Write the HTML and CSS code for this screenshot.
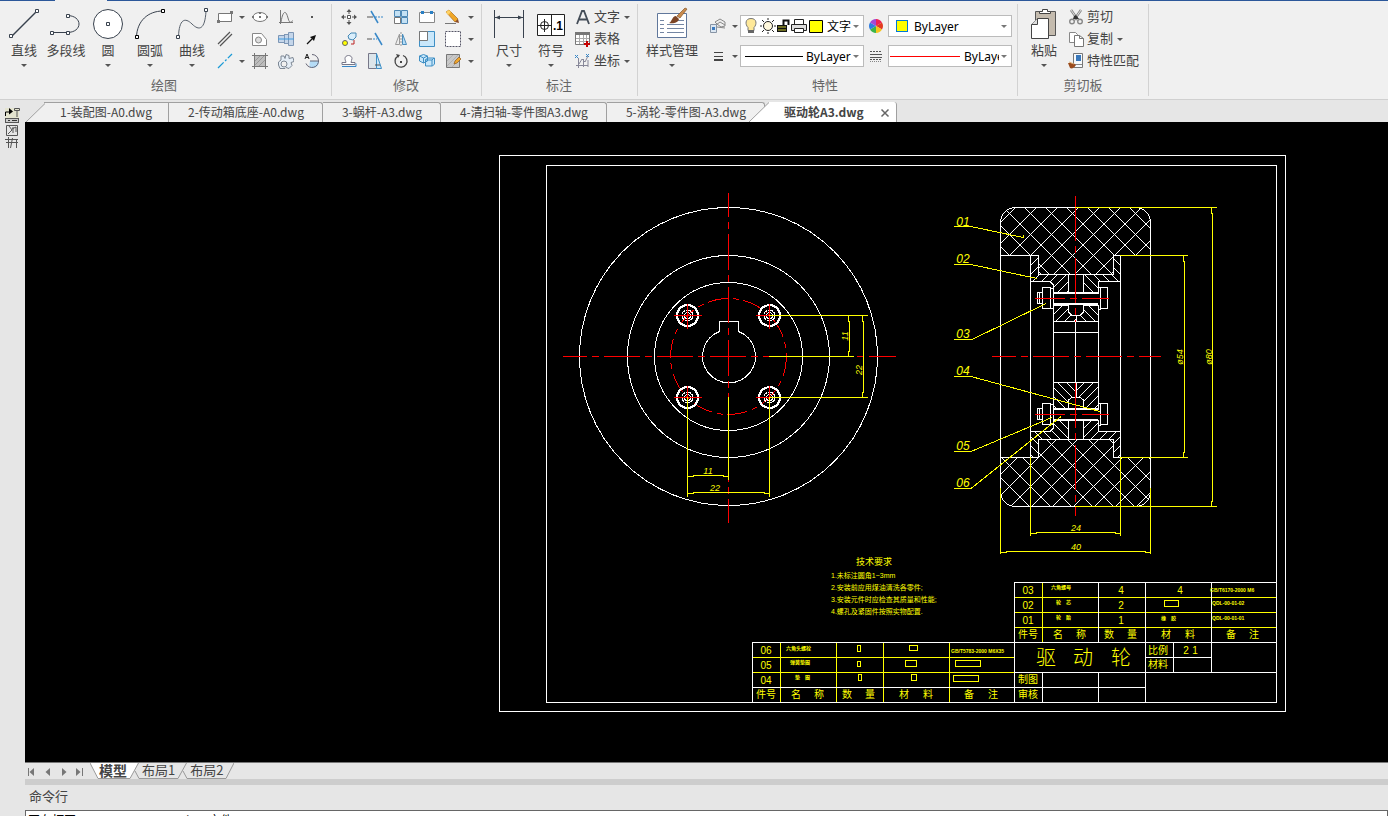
FILE: index.html
```html
<!doctype html>
<html lang="zh-CN">
<head>
	<title>驱动轮A3.dwg</title>
	<meta charset="utf-8">
	<link rel="stylesheet" href="styles.css">
</head>
<body>

	<!-- 功能区 -->
	<header class="ribbon">

		<!-- 绘图 -->
		<section class="group group-draw">
			<div class="tools">
				<button class="big"><svg width="36" height="36"><path d="M6 30L30 6" stroke="#39424e" stroke-width="1.5"/><g class="node"><path d="M3.500 28.500h3v3h-3zM29.500 3.500h3v3h-3z"/></g></svg><span>直线</span><i class="caret"></i></button>
				<button class="big"><svg width="36" height="36"><path d="M4 26.500H19C35 26.500 35 9.500 19 9.500" fill="none" stroke="#39424e"/><g class="node"><path d="M2.500 25.500h3v3h-3zM18.500 25.500h3v3h-3zM18.500 8.500h3v3h-3z"/></g></svg><span>多段线</span></button>
				<button class="big"><svg width="36" height="36"><circle cx="18" cy="18" r="14.500" fill="#fff" stroke="#39424e"/><path class="node" d="M16.500 16.500h3v3h-3z"/></svg><span>圆</span><i class="caret"></i></button>
				<button class="big"><svg width="36" height="36"><path d="M4.500 31C5 15 16 5 31 5" fill="none" stroke="#39424e"/><g class="node dark"><path d="M3.500 29.500h3v3h-3zM29.500 3.500h3v3h-3z"/></g></svg><span>圆弧</span><i class="caret"></i></button>
				<button class="big"><svg width="36" height="36"><path d="M4.500 31C5 13 11 11 18 18S31 24 32 5" fill="none" stroke="#58616c"/><g class="node"><path d="M2.500 29.500h3v3h-3zM30.500 2.500h3v3h-3z"/></g></svg><span>曲线</span><i class="caret"></i></button>
				<div class="grid grid-draw">
					<button aria-label="矩形"><svg width="16" height="16"><path d="M1.500 4.500h13v8h-13z" fill="#fff" stroke="#777"/><path d="M0 11h3v3H0zM13 2h3v3h-3z" fill="#777"/></svg></button>
					<i class="caret"></i>
					<button aria-label="椭圆"><svg width="16" height="16"><ellipse cx="8" cy="8" rx="7" ry="4.500" fill="#fff" stroke="#777"/><path d="M0 7h2v2H0zM7 7h2v2H7zM14 7h2v2h-2zM7 3h2v2H7z" fill="#777"/></svg></button>
					<button aria-label="函数曲线"><svg width="16" height="16"><path d="M2.500 1v14M1 13.500h14M3 13C5 1 8 1 10 9S14 11 15 12" fill="none" stroke="#777"/></svg></button>
					<button aria-label="点"><svg width="16" height="16"><path d="M7 7h2v2H7z" fill="#555"/></svg></button>

					<button aria-label="平行线"><svg width="16" height="16"><path d="M1 13L13 1M3 15L15 3" stroke="#555" stroke-width="1.200"/></svg></button>
					<i></i>
					<button aria-label="轮廓"><svg width="16" height="16"><path d="M.5 14.500v-12h9l5 6v6z" fill="#fff" stroke="#888"/><circle cx="6.500" cy="9" r="3" fill="#ddd" stroke="#888"/></svg></button>
					<button aria-label="轴"><svg width="16" height="16"><path d="M.5 4.500h6v-1h4v-2h5v13h-5v-2h-4v-1h-6z" fill="#c5d6ea" stroke="#7d96b5"/><path d="M6.500 3v10M10.500 2v12" stroke="#7d96b5"/><path d="M0 8h16" stroke="#3f9be0"/></svg></button>
					<button aria-label="箭头"><svg width="16" height="16"><path d="M3 13L8 8" stroke="#111" stroke-width="1.200"/><path d="M12 4L10 10 6 6z" fill="#111"/></svg></button>

					<button aria-label="中心线"><svg width="16" height="16"><path d="M1 15L15 1" stroke="#1a9ad6" stroke-width="1.300" stroke-dasharray="8 2 2 2"/></svg></button>
					<i class="caret"></i>
					<button aria-label="剖面线"><svg width="16" height="16"><path d="M2.500 2.500h11v11h-11z" fill="#bdbdbd"/><path d="M3 8l5-5M3 12l9-9M7 13l6-6" stroke="#999"/><path d="M2.500 0v16M13.500 0v16M0 2.500h16M0 13.500h16" stroke="#777"/></svg></button>
					<button aria-label="齿轮"><svg width="16" height="16"><path d="M7 5.500l1-4 3 1v3l4-1 1 4-3 1 1 3-3 3-3-1-1 1H2L.5 12V9L3 7V3h3z" fill="#e4edf6" stroke="#7d8794"/><circle cx="6" cy="11" r="3" fill="#f0f0f0" stroke="#7d8794"/></svg></button>
					<button aria-label="局部放大"><svg width="16" height="16"><path d="M6 8h9c0 4-2 7-6 7s-4-3-3-7z" fill="#b5dcf7"/><path d="M8 1.500a6.500 6.500 0 1 1-6 9M6 8h9" fill="none" stroke="#667"/><path d="M1 6l2-5 2 5M2 4.500h3" stroke="#222" fill="none"/></svg></button>
				</div>
			</div>
			<h2>绘图</h2>
		</section>

		<!-- 修改 -->
		<section class="group group-edit">
			<div class="tools">
				<div class="grid grid-edit">
					<button aria-label="移动"><svg width="16" height="16"><path d="M6.500 6.500h3v3h-3z" fill="#fff" stroke="#555"/><path d="M8 1v4M8 11v4M1 8h4M11 8h4" stroke="#555"/><path d="M8 0l2.500 3h-5zM8 16l2.500-3h-5zM0 8l3-2.500v5zM16 8l-3-2.500v5z" fill="#555"/></svg></button>
					<button aria-label="裁剪"><svg width="16" height="16"><path d="M0 8h6" stroke="#555"/><path d="M8 8h8" stroke="#3787c8" stroke-dasharray="2 1"/><path d="M4 2l7 12" stroke="#3787c8" stroke-width="1.500"/></svg></button>
					<button aria-label="阵列"><svg width="16" height="16"><path d="M1.500 1.500h6v6h-6zM8.500 1.500h6v6h-6zM8.500 8.500h6v6h-6z" fill="#c4e1f4" stroke="#4e88b5"/><path d="M1.500 8.500h6v6h-6z" fill="#fff" stroke="#777"/></svg></button>
					<button aria-label="打断"><svg width="16" height="16"><path d="M2 3.500H.5v10h15v-10H14M5 3.500h6" fill="#fff" stroke="#888"/><path d="M2 2h3v3H2zM11 2h3v3h-3z" fill="#297fc4"/></svg></button>
					<button aria-label="删除"><svg width="16" height="16"><path d="M1 3l3-2 9 9-3 3z" fill="#f0a727" stroke="#a66b1d" stroke-width=".7"/><path d="M1 3l3-2 2 2-3 3z" fill="#ffd263"/><path d="M10 13l3-3 1 4z" fill="#8a4c2a"/><path d="M0 14.500h11" stroke="#777"/></svg></button>
					<i class="caret"></i>

					<button aria-label="复制"><svg width="16" height="16"><circle cx="4" cy="12" r="2.500" fill="#ff0" stroke="#666"/><path d="M7 5l3-3 5 0v4l-3 3-4-1z" fill="#d9eefb" stroke="#4588b5"/><path d="M10 13h3V9" stroke="#b22" fill="none"/></svg></button>
					<button aria-label="延伸"><svg width="16" height="16"><path d="M0 8h5" stroke="#555"/><path d="M6 8h4" stroke="#3787c8" stroke-dasharray="2 1"/><path d="M8 2l7 12" stroke="#3787c8" stroke-width="1.500"/></svg></button>
					<button aria-label="镜像"><svg width="16" height="16"><path d="M6.500 3v10.500h-4z" fill="#eee" stroke="#999"/><path d="M9.500 3v10.500h4z" fill="#b5dcf7" stroke="#4b8dbb"/><path d="M8 1v14" stroke="#999" stroke-dasharray="2 1"/></svg></button>
					<button aria-label="缩放"><svg width="16" height="16"><path d="M.5 .5h15v15H.5z" fill="#c9e7fa" stroke="#3f8fc4"/><path d="M.5 .5h8v9h-8z" fill="#fff" stroke="#777"/></svg></button>
					<button aria-label="选择区域"><svg width="16" height="16"><path d="M.5 .5h15v15H.5z" fill="#fff" stroke="#556" stroke-dasharray="2 1"/></svg></button>
					<i class="caret"></i>

					<button aria-label="偏移"><svg width="16" height="16"><path d="M1 9.500h4c0-1-1-2-1-4 0-4 7-4 7 0 0 1-1 3-1 4h4v2H1z" fill="#fff" stroke="#778"/><path d="M1 13.500h14v-3" fill="none" stroke="#3787c8"/></svg></button>
					<button aria-label="拉伸"><svg width="16" height="16"><path d="M1.500 .5h8v15h-8z" fill="#dce5ea" stroke="#778"/><path d="M9.500 .5l5 15h-5z" fill="#c9e7fa" stroke="#3f8fc4"/><path d="M8 12h5" stroke="#555"/></svg></button>
					<button aria-label="旋转"><svg width="16" height="16"><path d="M10 2.500a6 6 0 1 1-5 .5" fill="none" stroke="#444" stroke-width="1.300"/><path d="M3 1l4 1-2 3zM7 8h2v2H7z" fill="#444"/></svg></button>
					<button aria-label="分解"><svg width="16" height="16"><path d="M.5 3l4-1.500 4 1.500v5l-4 2-4-2zM8.500 5h7v6l-2 2h-7V7z" fill="#c9e7fa" stroke="#3f8fc4"/><path d="M.5 3l4 2 4-2M4.500 5v5M6 7h7l2-2M13 7v6" fill="none" stroke="#3f8fc4"/></svg></button>
					<button aria-label="编辑填充"><svg width="16" height="16"><path d="M1.500 1.500h13v13h-13z" fill="#c8c8c8" stroke="#777"/><path d="M2 8l6-6M2 13L13 2M7 14l7-7" stroke="#b0b0b0"/><path d="M9 11l1-3 4-4 2 2-4 4z" fill="#efa62b" stroke="#8d5a20" stroke-width=".7"/></svg></button>
					<i class="caret"></i>
				</div>
			</div>
			<h2>修改</h2>
		</section>

		<!-- 标注 -->
		<section class="group group-note">
			<div class="tools">
				<button class="big"><svg width="36" height="36"><path d="M3.500 4v28M32.500 4v28M4 11.500h28" stroke="#39424e"/><path d="M4 11.500l5-2v4zM32 11.500l-5-2v4z" fill="#39424e"/></svg><span>尺寸</span><i class="caret"></i></button>
				<button class="big"><svg width="36" height="36"><path d="M4.500 8.500h27v21h-27zM18.500 8v22" fill="#fff" stroke="#222"/><circle cx="11.500" cy="19.500" r="4" fill="none" stroke="#222"/><path d="M5 19.500h13M11.500 13v13" stroke="#222"/><text x="20" y="24" font-size="12" font-weight="bold" font-family="Liberation Sans">.1</text></svg><span>符号</span><i class="caret"></i></button>
				<div class="list">
					<button><svg width="16" height="16"><path d="M2 15L7 2h2l5 13M4 10.500h8" fill="none" stroke="#444d58" stroke-width="1.800"/></svg><span>文字</span><i class="caret"></i></button>
					<button><svg width="16" height="16"><path d="M.5 1.500h14v12H.5z" fill="#fff" stroke="#777"/><path d="M0 1h15v3H0z" fill="#777"/><path d="M4.500 4v9M8.500 4v9M11.500 4v9M1 7.500h13M1 10.500h13" stroke="#aaa"/><path d="M12 10v6M9 13h6" stroke="#c40000" stroke-width="2"/></svg><span>表格</span></button>
					<button><svg width="16" height="16"><path d="M3.500 5v10M1 12.500h12M4 11l3-5 3 3 3-6M8.500 6v8M13 7v7" fill="none" stroke="#889"/><path d="M0 2l3 3M3 2L0 5M11 1l3 3M14 1l-3 3" stroke="#3787c8"/></svg><span>坐标</span><i class="caret"></i></button>
				</div>
			</div>
			<h2>标注</h2>
		</section>

		<!-- 特性 -->
		<section class="group group-prop">
			<div class="tools">
				<button class="big wide"><svg width="36" height="36"><path d="M3.500 7.500h29v24h-29z" fill="#fff" stroke="#60779b"/><path d="M6 14.500h4M6 18.500h4M6 22.500h4M6 26.500h4M13 18.500h17M13 22.500h17M13 26.500h17M23 14.500h7" stroke="#7486a3"/><path d="M31 2l2 1-7 9-3-2z" fill="#c98b4e" stroke="#875626" stroke-width=".7"/><path d="M15 17c3-1 3-7 7-7l3 3c-1 4-6 5-10 4z" fill="#7c4424"/></svg><span>样式管理</span><i class="caret"></i></button>
				<div class="props">
					<button aria-label="图层"><svg width="16" height="16"><path d="M5 4l5-3 5 3v4l-4 1-4-3zM6 7l4-3 5 3M7 9l8 1" fill="#eee" stroke="#888"/><path d="M.5 6.500h6v8h-6z" fill="#dce7f2" stroke="#8794a5"/><path d="M2 9h3v3H2z" fill="#3b7bc0"/></svg></button>
					<i class="caret"></i>
					<div class="combo combo-layer">
						<svg width="84" height="18"><path d="M6 1.500c-6 0-6 6-3 9v3h6v-3c3-3 3-9-3-9z" fill="#ffe99a" stroke="#777"/><path d="M3 13h6v3H3z" fill="#666"/><circle cx="23" cy="9" r="4.500" fill="#fff8dc" stroke="#222"/><path d="M23 1v2M23 15v2M15 9h2M29 9h2M17 3l2 2M27 13l2 2M29 3l-2 2M17 15l2-2" stroke="#222"/><path d="M32 8h10v7H32z" fill="#111"/><path d="M33 10h8M33 13h8" stroke="#cc3"/><path d="M38.500 8V3.500h5V8" stroke="#111" stroke-width="2" fill="none"/><path d="M49.500 7V2.500h9V7" fill="#fff" stroke="#222"/><path d="M46.500 7.500h15v6h-15z" fill="#ddd" stroke="#222"/><path d="M49.500 11.500h9v4h-9z" fill="#fff" stroke="#222"/><path d="M64.500 3.500h13v12h-13z" fill="#ff0" stroke="#000"/></svg>
						<select aria-label="图层"><option>文字</option></select>
						<i class="caret"></i>
					</div>
					<button aria-label="颜色"><svg width="16" height="16" viewBox="-8 -8 16 16"><path d="M0 0V-7A7 7 0 0 1 6 -3.500z" fill="#e25"/><path d="M0 0L6 -3.500A7 7 0 0 1 6 3.500z" fill="#e33a20"/><path d="M0 0L6 3.500A7 7 0 0 1 0 7z" fill="#f6c51d"/><path d="M0 0V7A7 7 0 0 1 -6 3.500z" fill="#3cb54a"/><path d="M0 0L-6 3.500A7 7 0 0 1 -6 -3.500z" fill="#2e7de0"/><path d="M0 0L-6 -3.500A7 7 0 0 1 0 -7z" fill="#a348d6"/></svg></button>
					<div class="combo">
						<i class="swatch"></i>
						<select aria-label="颜色"><option>ByLayer</option></select>
						<i class="caret"></i>
					</div>

					<button aria-label="线宽"><svg width="16" height="16"><path d="M4 4.500h9M4 8.500h9" stroke="#444"/><path d="M4 12h9" stroke="#444" stroke-width="2"/></svg></button>
					<i class="caret"></i>
					<div class="combo">
						<i class="line"></i>
						<select aria-label="线宽"><option>ByLayer</option></select>
						<i class="caret"></i>
					</div>
					<button aria-label="线型"><svg width="16" height="16"><path d="M2 3.500h12M2 11.500h12" stroke="#555" stroke-dasharray="2 1"/><path d="M2 6.500h12M2 9.500h12" stroke="#555"/><path d="M2 13.500h12" stroke="#888" stroke-dasharray="1 1"/></svg></button>
					<div class="combo">
						<i class="line line-red"></i>
						<select aria-label="线型"><option>ByLayer</option></select>
						<i class="caret"></i>
					</div>
				</div>
			</div>
			<h2>特性</h2>
		</section>

		<!-- 剪切板 -->
		<section class="group group-clip">
			<div class="tools">
				<button class="big"><svg width="36" height="36"><path d="M9.500 5.500h20v24h-20z" fill="#c4bbae" stroke="#555"/><path d="M13.500 7.500v-2h3v-2h5v2h3v2z" fill="#fff" stroke="#444"/><path d="M5.500 18.500l6-6h11v20h-17z" fill="#fff" stroke="#444"/><path d="M5.500 18.500h6v-6" fill="#ddd" stroke="#444"/></svg><span>粘贴</span><i class="caret"></i></button>
				<div class="list">
					<button><svg width="16" height="16"><path d="M3 1l7 10M13 1L6 11" stroke="#888" stroke-width="2.500"/><path d="M3 1l7 10M13 1L6 11" stroke="#ddd"/><path d="M6 7l2-1 3 4H5z" fill="#333"/><circle cx="4" cy="12.500" r="2.300" fill="none" stroke="#888" stroke-width="1.400"/><circle cx="12" cy="12.500" r="2.300" fill="none" stroke="#888" stroke-width="1.400"/></svg><span>剪切</span></button>
					<button><svg width="16" height="16"><path d="M1.500 1.500h6l2 2v8h-8z" fill="#fff" stroke="#888"/><path d="M6.500 4.500h5l4 3v8h-9z" fill="#fff" stroke="#777"/><path d="M11.500 4.500v3h4" fill="none" stroke="#777"/></svg><span>复制</span><i class="caret"></i></button>
					<button><svg width="16" height="16"><path d="M5.500 .5h9v14h-9z" fill="#f6f9fc" stroke="#777"/><path d="M8 2h5v6H8z" fill="#3978bb"/><path d="M7 11.500h7" stroke="#888"/><path d="M0 10c3 0 6 0 8 2-2 3-4 4-6 3z" fill="#9a4b1d"/><path d="M1 9l5 2" stroke="#e0ae72"/></svg><span>特性匹配</span></button>
				</div>
			</div>
			<h2>剪切板</h2>
		</section>
	</header>

	<div class="work">
		<!-- 左侧停靠栏 -->
		<aside class="dock">
			<svg width="18" height="44" viewBox="3 106 18 44"><path d="M5 108h14v13H5z" fill="#e4e4cf"/><path d="M5.500 116v-4h4" fill="none" stroke="#000"/><path d="M9 108l4 3.500-4 3z" fill="#000"/><path d="M14.500 108.500v2h5v-2zM17 111v6" stroke="#555" fill="none"/><rect x="5.500" y="118.500" width="13" height="4" fill="#ccc" stroke="#555"/><path d="M8 120.500h2M12 120.500h5" stroke="#333"/><path d="M6.500 125.500h11v10h-11zM9 126l3 4-4 4M13 127v6M12 129l4-2v5" fill="none" stroke="#555"/><path d="M5 139.500h13M6 142.500h12M8.500 137v11M12.500 138l-2 10M16.500 139v9" fill="none" stroke="#555"/></svg>
		</aside>

		<main class="main">
			<!-- 文件标签 -->
			<nav class="tabs">
				<a class="tab first" href="#"><svg width="20" height="20"><path d="M0 20L20 .5V20z" fill="#f0f0f0"/><path d="M0 20L20 .5" stroke="#a0a0a0"/></svg><span>1-装配图-A0.dwg</span></a>
				<a class="tab" href="#"><span>2-传动箱底座-A0.dwg</span></a>
				<a class="tab" href="#"><span>3-蜗杆-A3.dwg</span></a>
				<a class="tab" href="#"><span>4-清扫轴-零件图A3.dwg</span></a>
				<a class="tab" href="#"><span>5-涡轮-零件图-A3.dwg</span></a>
				<a class="tab active" href="#"><svg width="20" height="20"><path d="M0 20L20 .5V20z" fill="#fff"/><path d="M0 20L20 .5" stroke="#a0a0a0"/></svg><span>驱动轮A3.dwg</span><svg class="close" width="10" height="10"><path d="M1.500 1.500l7 7M8.500 1.500l-7 7" stroke="#666" stroke-width="1.500"/></svg></a>
			</nav>

			<!-- 绘图区 -->
			<div class="canvas">
				<svg viewBox="25 122 1363 640" preserveAspectRatio="xMinYMin meet">
					<defs>
						<!-- 橡胶网格剖面线 -->
						<pattern id="rubber" patternUnits="userSpaceOnUse" x="1020" y="224" width="21" height="21"><path d="M0 0L21 21M21 0L0 21" stroke="#fff"/></pattern>
						<pattern id="steelA" patternUnits="userSpaceOnUse" width="9" height="9"><path d="M0 9L9 0" stroke="#fff"/></pattern>
						<pattern id="steelB" patternUnits="userSpaceOnUse" width="9" height="9"><path d="M0 0L9 9" stroke="#fff"/></pattern>
						<g id="screw">
							<circle r="10.500" stroke-width="2"/>
							<circle r="5.500" stroke-dasharray="5 1"/><circle r="3"/>
							<path class="r" d="M-14 0H14M0 -12V13"/>
						</g>
						<g id="bolt">
							<path d="M1053 -5.500H1098M1053 5.500H1098" stroke-width="2"/>
							<path d="M1042.500 -10.500H1050.500V10.500H1042.500zM1042 -5.500H1037.500V5.500H1042M1039.500 -5V5M1050.500 -9.500H1053V10H1050.500M1100.500 -10.500H1107.500V10.500H1100.500zM1098.500 -11H1100.500V11H1098.500"/>
							<path class="r" d="M1035 0.500H1109" stroke-dasharray="30 5 7 5"/>
						</g>
					</defs>

					<!-- 图框 -->
					<g class="w">
						<path d="M499.500 155.500H1285.500V711.500H499.500zM546.500 165.500H1276.500V702.500H546.500z"/>
					</g>

					<!-- 主视图 -->
					<g class="w">
						<circle cx="728.500" cy="356.500" r="149"/>
						<circle cx="728.500" cy="356.500" r="101"/>
						<circle cx="728.500" cy="356.500" r="74"/>
						<path d="M719.500 331.500V321.500H738.500V331.500A26.500 26.500 0 1 1 719.500 331.500"/>
						<circle class="r" cx="728.500" cy="356.500" r="58" stroke-dasharray="20 5 6 5"/>
						<use href="#screw" x="687.500" y="315.500"/>
						<use href="#screw" x="769.500" y="315.500"/>
						<use href="#screw" x="687.500" y="397.500"/>
						<use href="#screw" x="769.500" y="397.500"/>
					</g>
					<path class="r" d="M563 356.500H896M728.500 193V523" stroke-dasharray="36 5 7 5" stroke-dashoffset="12"/>
					<g class="y">
						<path d="M769 315.500H868M769 397.500H868M769 356.500H854M687.500 397V497M728.500 397V480M769.500 397V497"/>
						<path d="M848.500 315V321H849.500V351H848.500V357M862.500 315V321H863.500V392H862.500V398"/>
						<path d="M687 476.500H693V475.500H723V476.500H729M687 493.500H693V492.500H764V493.500H770"/>
					</g>
					<g class="dim">
						<text x="708" y="474">11</text>
						<text x="715" y="491">22</text>
						<text transform="translate(848 336) rotate(-90)">11</text>
						<text transform="translate(862 370) rotate(-90)">22</text>
					</g>

					<!-- 剖视图 -->
					<g class="w">
						<path fill="url(#rubber)" d="M1000.500 255.500V222.500A15 15 0 0 1 1015.500 207.500H1135.500A15 15 0 0 1 1150.500 222.500V255.500H1113.500V274.500H1038.500V255.500z"/>
						<path fill="url(#rubber)" d="M1000.500 457.500V491.500A15 15 0 0 0 1015.500 506.500H1135.500A15 15 0 0 0 1150.500 491.500V457.500H1113.500V439.500H1038.500V457.500z"/>
						<path fill="url(#steelA)" d="M1030.500 255.500H1038.500V271L1041 274.500H1068.500V293.500H1053.500V285L1050 281.500H1030.500z"/>
						<path fill="url(#steelB)" d="M1120.500 255.500H1113.500V271L1111 274.500H1083.500V293.500H1098.500V281.500H1120.500z"/>
						<path fill="url(#steelA)" d="M1053.500 305.500H1068.500V312L1072 315.500H1076V321.500H1053.500z"/>
						<path fill="url(#steelB)" d="M1098.500 305.500H1083.500V312L1080 315.500H1076V321.500H1098.500z"/>
						<path fill="url(#steelB)" d="M1053.500 409.500H1068.500V400L1072 397.500H1076V382.500H1053.500z"/>
						<path fill="url(#steelA)" d="M1098.500 409.500H1083.500V400L1080 397.500H1076V382.500H1098.500z"/>
						<path fill="url(#steelB)" d="M1030.500 457.500H1038.500V439.500H1068.500V420.500H1053.500V428L1050 431.500H1030.500z"/>
						<path fill="url(#steelA)" d="M1120.500 457.500H1113.500V439.500H1083.500V420.500H1098.500V431.500H1120.500z"/>
						<path d="M1000.500 255V458M1150.500 255V458M1030.500 281V432M1120.500 281V432M1053.500 321V383M1098.500 321V383M1075.500 321V383M1053 332.500H1098"/>
						<use href="#bolt" y="298"/>
						<use href="#bolt" y="414"/>
					</g>
					<path class="r" d="M992 356.500H1161" stroke-dasharray="36 5 7 5" stroke-dashoffset="12"/>
					<path class="r" d="M1075.500 196V322M1075.500 383V516" stroke-dasharray="45 5 7 5"/>
					<g class="y">
						<path d="M1075 207.500H1217M1120 255.500H1188M1120 457.500H1188M1075 506.500H1217"/>
						<path d="M1183.500 255V261H1184.500V452H1183.500V458M1211.500 207V213H1212.500V501H1211.500V507"/>
						<path d="M1030.500 457V536M1120.500 457V536M1000.500 488V554M1150.500 488V554"/>
						<path d="M1030 533.500H1036V532.500H1115V533.500H1121M1000 552.500H1006V551.500H1145V552.500H1151"/>
						<!-- 序号引线 -->
						<path d="M954 226.500H971L1023 237.500V235M954 264.500H971L1037 278.500M954 339.500H972L1046 303.500M954 376.500H971L1100 411.500M954 451.500H971L1052 417.500M954 488.500H971L1061 416.500"/>
					</g>
					<g class="dim">
						<text x="1076" y="531">24</text>
						<text x="1076" y="550">40</text>
						<text transform="translate(1183 357) rotate(-90)">ø54</text>
						<text transform="translate(1212 357) rotate(-90)">ø80</text>
					</g>
					<g class="no">
						<text x="963" y="226">01</text>
						<text x="963" y="263">02</text>
						<text x="963" y="338">03</text>
						<text x="963" y="375">04</text>
						<text x="963" y="450">05</text>
						<text x="963" y="487">06</text>
					</g>

					<!-- 技术要求 -->
					<g class="note">
						<text class="note-title" x="856" y="565">技术要求</text>
						<text x="831" y="578">1.未标注圆角1~3mm</text>
						<text x="831" y="590">2.安装前应用煤油清洗各零件;</text>
						<text x="831" y="602">3.安装元件时应检查其质量和性能;</text>
						<text x="831" y="614">4.螺孔及紧固件按照实物配置.</text>
					</g>

					<!-- 标题栏 -->
					<g class="y">
						<path d="M752 657.500H1014M752 672.500H1014M780.500 643V702M836.500 643V702M883.500 643V702M949.500 643V702"/>
						<path d="M1014 597.500H1276M1014 612.500H1276M1014 627.500H1276M1042.500 583V642"/>
						<path d="M857.500 645.500h3v6h-3zM909.500 645.500h8v5h-8zM857.500 661.500h3v5h-3zM905.500 660.500h11v6h-11zM955.500 660.500h25v6h-25zM858.500 674.500h3v6h-3zM911.500 674.500h5v6h-5zM953.500 675.500h25v6h-25zM1164.500 600.500h14v6h-14z"/>
					</g>
					<g class="w">
						<path d="M752.500 702V642.500H1014M752 687.500H1014M1014.500 702V582.500H1276M1014 642.500H1276M1014 672.500H1276M1098.500 583V642M1145.500 583V702M1211.500 583V672M1145 657.500H1211M1173.500 642V672M1014 687.500H1145M1042.500 672V702M1098.500 672V702"/>
					</g>
					<g class="cell">
						<text x="766" y="654">06</text><text x="766" y="669">05</text><text x="766" y="684">04</text>
						<text x="1028" y="594">03</text><text x="1028" y="609">02</text><text x="1028" y="624">01</text>
						<text x="1121" y="594">4</text><text x="1121" y="609">2</text><text x="1121" y="624">1</text>
						<text x="1180" y="594">4</text>
						<text x="766" y="698">件号</text><text x="796" y="698">名</text><text x="819" y="698">称</text>
						<text x="847" y="698">数</text><text x="870" y="698">量</text><text x="904" y="698">材</text><text x="928" y="698">料</text>
						<text x="969" y="698">备</text><text x="993" y="698">注</text>
						<text x="1028" y="638">件号</text><text x="1058" y="638">名</text><text x="1081" y="638">称</text>
						<text x="1109" y="638">数</text><text x="1132" y="638">量</text><text x="1166" y="638">材</text><text x="1190" y="638">料</text>
						<text x="1231" y="638">备</text><text x="1254" y="638">注</text>
						<text x="1158" y="654">比例</text><text x="1186" y="654">2</text><text x="1195" y="654">1</text>
						<text x="1158" y="668">材料</text>
						<text x="1028" y="683">制图</text><text x="1028" y="698">审核</text>
					</g>
					<g class="name">
						<text x="1046" y="665">驱</text><text x="1083" y="665">动</text><text x="1121" y="665">轮</text>
					</g>
					<g class="tiny">
						<text x="786" y="650">六角头螺栓</text><text x="790" y="664">弹簧垫圈</text><text x="795" y="679">垫　圈</text>
						<text x="1051" y="589">六角螺母</text><text x="1056" y="604">轮　芯</text><text x="1056" y="619">轮　胎</text>
						<text x="1161" y="620">橡　胶</text>
						<text x="951" y="653">GB/T5783-2000 M6X35</text>
						<text x="1210" y="592">GB/T6170-2000 M6</text>
						<text x="1212" y="605">QDL-00-01-02</text>
						<text x="1212" y="620">QDL-00-01-01</text>
					</g>
				</svg>
			</div>

			<!-- 布局标签 -->
			<nav class="layouts">
				<button aria-label="第一个"><svg width="16" height="16"><path d="M4.500 5v8" stroke="#777"/><path d="M10 5v8L5.500 9z" fill="#777"/></svg></button>
				<button aria-label="上一个"><svg width="16" height="16"><path d="M10 5v8L5.500 9z" fill="#777"/></svg></button>
				<button aria-label="下一个"><svg width="16" height="16"><path d="M6 5v8l4.500-4z" fill="#777"/></svg></button>
				<button aria-label="最后一个"><svg width="16" height="16"><path d="M4 5v8l4.500-4z" fill="#777"/><path d="M10.500 5v8" stroke="#777"/></svg></button>
				<svg width="8" height="16"><path d="M0 0L8 16V0z" fill="#fff"/><path d="M0 0L8 15.500" stroke="#999"/></svg>
				<a class="current" href="#">模型</a>
				<svg width="9" height="16"><path d="M0 0H8L0 16z" fill="#fff"/><path d="M8.500 0L0 15.500M5 8L9 15.500" stroke="#999"/></svg>
				<a href="#">布局1</a>
				<svg width="9" height="16"><path d="M8.500 0L0 15.500M5 8L9 15.500" stroke="#999"/></svg>
				<a href="#">布局2</a>
				<svg width="8" height="16"><path d="M8 0L0 15.500" stroke="#999"/></svg>
			</nav>

			<!-- 命令行 -->
			<section class="command">
				<h2>命令行</h2>
				<div class="log">正在打开<span>dwg 文件</span></div>
			</section>
		</main>
	</div>
</body>
</html>
```
FILE: styles.css
```css
*{
	box-sizing:border-box;
}
html,body{
	height:100%;
}
body{
	margin:0;
	display:flex;
	flex-direction:column;
	overflow:hidden;
	background:#e6e6e6;
	color:#444;
	font:13px/18px "Noto Sans CJK SC",sans-serif;
}
button{
	margin:0;
	padding:0;
	border:0;
	background:none;
	color:inherit;
	font:inherit;
}
a{
	color:inherit;
	text-decoration:none;
}
h2{
	margin:0;
	font-size:13px;
	font-weight:normal;
}
svg{
	display:block;
	flex:none;
}

/** 功能区 **/
.ribbon{
	flex:none;
	display:flex;
	height:100px;
	padding:4px 0 3px;
	background:linear-gradient(90deg,#2b579a 55px,#f0f0f0 55px,#f0f0f0 107px,#2b579a 107px) top/100% 1px no-repeat #f0f0f0;
	border-bottom:1px solid #d0d0d0;
}
.group{
	flex:none;
	display:flex;
	flex-direction:column;
	border-right:1px solid #d2d2d2;
}
.group h2{
	margin-top:1px;
	text-align:center;
	color:#666;
}
.group-draw{ padding:0 6px 0 3px; }
.group-edit{ padding:0 5px 0 4px; }
.group-note{ padding:0 7px 0 6px; }
.group-prop{ padding:0 5px 0 0; }
.group-clip{ padding:0 5px; }
.tools{
	display:flex;
	height:71px;
	padding-top:2px;
}
.caret{
	flex:none;
	justify-self:center;
	border:3px solid transparent;
	border-top-color:#555;
	border-bottom:0;
}
.big{
	display:flex;
	flex-direction:column;
	align-items:center;
	width:42px;
	line-height:16px;
	white-space:nowrap;
}
.big.wide{
	width:68px;
}
.big .caret{
	margin-top:6px;
}
.node{
	fill:#fff;
	stroke:#39424e;
}
.node.dark{
	stroke:#000;
}

.grid{
	display:grid;
	grid-auto-rows:22px;
	align-items:center;
}
.grid-draw{ grid-template-columns:24px 10px 26px 26px 26px; }
.grid-edit{ grid-template-columns:repeat(5,26px) 10px; }
.grid svg,.props svg{
	margin:0 auto;
}
.list button{
	display:flex;
	align-items:center;
	height:22px;
	padding-left:3px;
}
.list span{
	margin:0 4px 0 3px;
	padding-bottom:2px;
}

/** 特性下拉框 **/
.props{
	display:grid;
	grid-template-columns:24px 10px 124px 24px 124px;
	grid-auto-rows:22px;
	row-gap:8px;
	align-items:center;
	padding-top:9px;
}
.combo{
	display:flex;
	align-items:center;
	height:22px;
	padding:0 4px;
	background:#fff;
	border:1px solid #bbb;
	overflow:hidden;
}
.combo svg{
	margin:0;
}
.combo-layer svg{
	margin-right:-2px;
}
.combo select{
	flex:1;
	min-width:0;
	padding:0;
	border:0;
	background:none;
	appearance:none;
	color:#000;
	font:12px "Noto Sans","Noto Sans CJK SC",sans-serif;
	overflow:hidden;
}
.combo .caret{
	margin-left:2px;
	border-top-color:#777;
}
.swatch{
	width:12px;
	height:12px;
	margin:0 6px 0 3px;
	background:#ff0;
	border:1px solid #0078d7;
}
.line{
	width:58px;
	margin-right:3px;
	border-top:1px solid #000;
}
.line-red{
	width:70px;
	margin:0 4px 0 -3px;
	border-color:#f00;
}

/** 工作区 **/
.work{
	flex:1;
	display:flex;
	min-height:0;
}
.dock{
	flex:none;
	width:25px;
	padding:6px 3px;
}
.main{
	flex:1;
	display:flex;
	flex-direction:column;
	min-width:0;
}
.tabs{
	flex:none;
	display:flex;
	height:22px;
	padding-top:2px;
	font-size:12px;
}
.tab{
	display:flex;
	height:20px;
	padding:0 18px 0 19px;
	background:#f0f0f0;
	border:1px solid #a0a0a0;
	border-width:1px 1px 0 0;
	border-top-right-radius:3px;
	white-space:nowrap;
}
.tab.first{
	padding:0 16px 0 0;
	background:linear-gradient(90deg,transparent 20px,#f0f0f0 20px);
	border-image:linear-gradient(90deg,transparent 20px,#a0a0a0 20px) 1;
}
.tab.first span{
	margin-left:15px;
}
.tab.active{
	margin-left:-16px;
	padding:0 6px 0 0;
	background:linear-gradient(90deg,transparent 20px,#fff 20px);
	border-top:0;
	font-weight:bold;
}
.tab.active span{
	margin:1px 16px 0 15px;
}
.close{
	margin-top:6px;
}

/** 绘图区 **/
.canvas{
	flex:1;
	min-height:0;
	background:#000;
}
.canvas svg{
	width:100%;
	height:100%;
	shape-rendering:crispEdges;
}
.w,.y,.r{
	fill:none;
	stroke:#fff;
}
.y{
	stroke:#ff0;
}
.r{
	stroke:#f00;
}
.dim,.no,.note,.cell,.name,.tiny{
	fill:#ff0;
	font-family:"Liberation Sans Narrow","Liberation Sans","Noto Sans CJK SC",sans-serif;
}
.dim,.no,.cell,.name{
	text-anchor:middle;
}
.dim{
	font-size:9px;
	font-style:italic;
}
.no{
	font-size:12px;
	font-style:italic;
}
.note{
	font-size:7px;
}
.note-title{
	font-size:9px;
}
.cell{
	font-size:10px;
}
.name{
	font-size:20px;
	font-weight:300;
}
.tiny{
	font-size:5px;
	font-weight:bold;
}

/** 布局标签 **/
.layouts{
	flex:none;
	display:flex;
	height:17px;
	border-top:1px solid #777;
	line-height:14px;
}
.layouts button:first-child{
	margin-left:-1px;
}
.layouts button:nth-child(4){
	margin-right:2px;
}
.layouts a{
	height:16px;
	padding:0 3px;
	border-bottom:1px solid #999;
}
.layouts .current{
	padding:0 3px 0 1px;
	background:#fff;
	font-weight:bold;
	font-size:14px;
}

/** 命令行 **/
.command{
	flex:none;
	height:37px;
	border-top:6px solid #cdcdcd;
	overflow:hidden;
}
.command h2{
	padding:2px 4px 5px;
}
.log{
	height:60px;
	padding:0 2px;
	background:#fff;
	border:1px solid #666;
	color:#000;
	font-size:12px;
}
.log span{
	margin-left:106px;
}
```
